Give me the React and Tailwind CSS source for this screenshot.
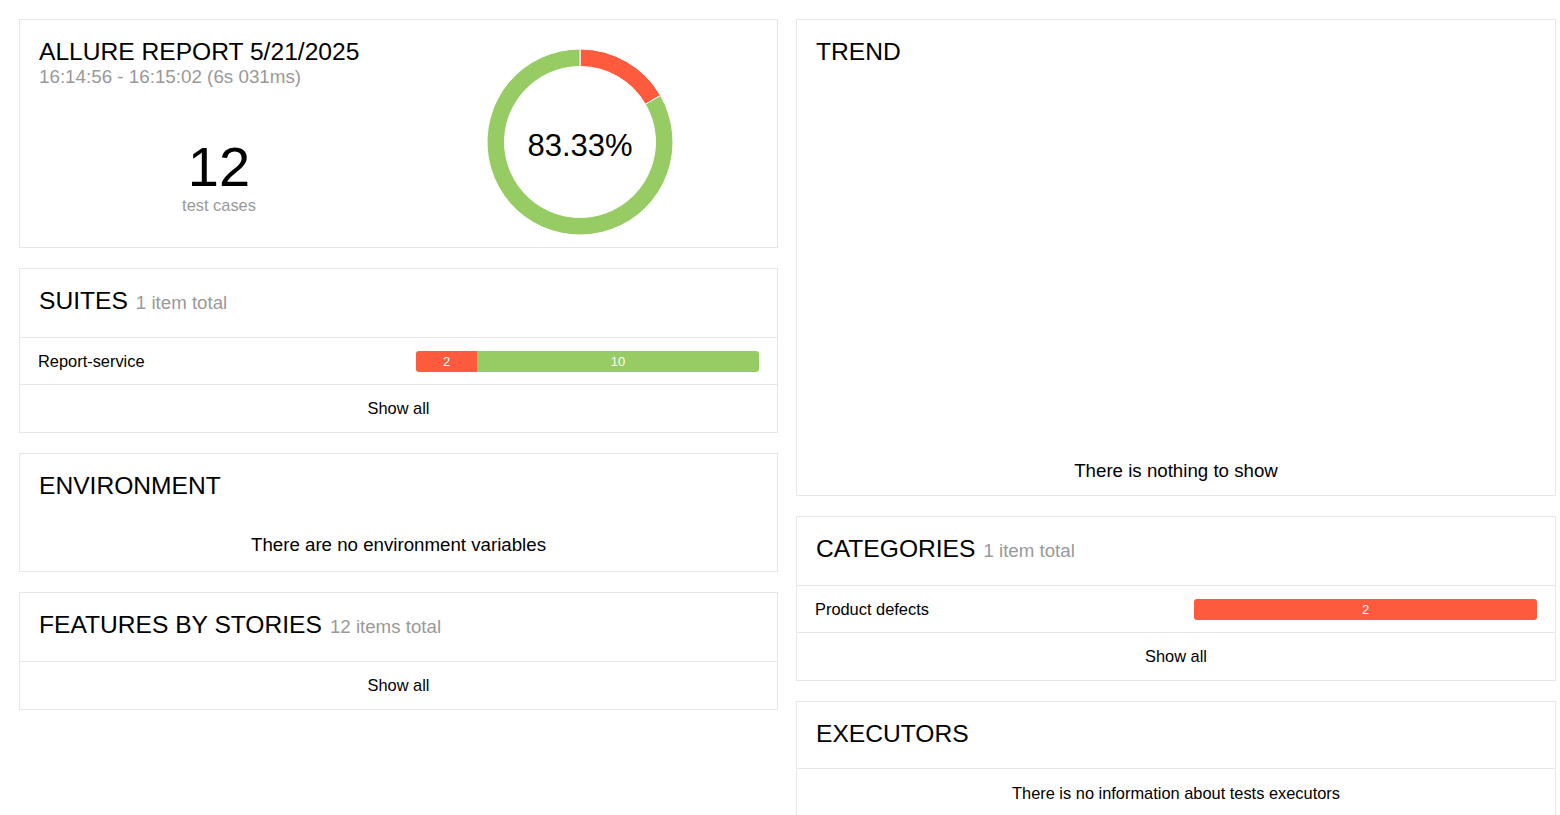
import React from "react";

const font = { fontFamily: '"Liberation Sans", Arial, sans-serif' };

const RED = "#fd5a3e";
const GREEN = "#97cc64";

function Card({ children, className = "" }) {
  return (
    <div className={`bg-white border border-[#e7e7e7] ${className}`}>
      {children}
    </div>
  );
}

function CardTitle({ title, subtitle, divider = true }) {
  return (
    <div
      className={`pl-[19px] pr-5 pt-[19px] pb-[21px] text-[24.6px] leading-[26px] text-black ${
        divider ? "border-b border-[#e7e7e7]" : ""
      }`}
    >
      {title}
      {subtitle && (
        <span className="ml-[8px] text-[18.7px] text-[#999]">{subtitle}</span>
      )}
    </div>
  );
}

function StatusBar({ segments }) {
  return (
    <div className="flex h-[21px] w-[343px] overflow-hidden rounded-[3px] text-[13px] leading-[21px] text-white">
      {segments.map((s, i) => (
        <div
          key={i}
          className={`text-center ${s.grow ? "flex-1" : ""}`}
          style={{ background: s.color, width: s.grow ? undefined : s.width }}
        >
          {s.value}
        </div>
      ))}
    </div>
  );
}

function Row({ name, segments }) {
  return (
    <div className="flex h-[47px] items-center justify-between border-b border-[#e7e7e7] px-[18px] text-[16.4px] text-black">
      <span>{name}</span>
      <StatusBar segments={segments} />
    </div>
  );
}

function ShowAll() {
  return (
    <div className="flex h-[47px] items-center justify-center text-[16.4px] text-black">
      Show all
    </div>
  );
}

function Donut() {
  // ring split: 2 failed (60deg from top), 10 passed
  return (
    <div className="relative h-[200px] w-[200px]">
      <svg width="200" height="200" viewBox="0 0 200 200">
        <path
          d="M100 7 A93 93 0 0 1 180.54 53.5 L165.38 62.25 A75.5 75.5 0 0 0 100 24.5 Z"
          fill={RED}
          stroke="#fff"
          strokeWidth="1"
        />
        <path
          d="M180.54 53.5 A93 93 0 1 1 100 7 L100 24.5 A75.5 75.5 0 1 0 165.38 62.25 Z"
          fill={GREEN}
          stroke="#fff"
          strokeWidth="1"
        />
      </svg>
      <div className="absolute inset-0 flex items-center justify-center pt-[6px] text-[31px] leading-none text-black">
        83.33%
      </div>
    </div>
  );
}

export default function App() {
  return (
    <div className="min-h-screen bg-white" style={font}>
      <div className="grid grid-cols-[759px_760px] gap-x-[18px] pl-[19px] pt-[19px]">
        {/* left column */}
        <div className="flex flex-col gap-5">
          <Card className="h-[229px]">
            <div className="flex pl-[19px] pr-5 pt-[19px]">
              <div className="flex w-[360px] flex-col">
                <div className="text-[24.6px] leading-[26px] text-black">
                  ALLURE REPORT 5/21/2025
                </div>
                <div className="text-[18.8px] leading-[24px] text-[#999]">
                  16:14:56 - 16:15:02 (6s 031ms)
                </div>
                <div className="mt-[50px] flex flex-col items-center">
                  <div className="text-[56px] leading-[56px] text-black">12</div>
                  <div className="mt-[2px] text-[16.4px] leading-4 text-[#999]">
                    test cases
                  </div>
                </div>
              </div>
              <div className="ml-[81px] mt-[3px]">
                <Donut />
              </div>
            </div>
          </Card>

          <Card>
            <CardTitle title="SUITES" subtitle="1 item total" />
            <Row
              name="Report-service"
              segments={[
                { value: 2, color: RED, width: 61 },
                { value: 10, color: GREEN, grow: true },
              ]}
            />
            <ShowAll />
          </Card>

          <Card>
            <CardTitle title="ENVIRONMENT" divider={false} />
            <div className="flex h-[51px] items-center justify-center text-[18.7px] text-black">
              There are no environment variables
            </div>
          </Card>

          <Card>
            <CardTitle title="FEATURES BY STORIES" subtitle="12 items total" />
            <ShowAll />
          </Card>
        </div>

        {/* right column */}
        <div className="flex flex-col gap-5">
          <Card>
            <CardTitle title="TREND" divider={false} />
            <div className="h-[361px]" />
            <div className="flex h-12 items-center justify-center text-[18.7px] text-black">
              There is nothing to show
            </div>
          </Card>

          <Card>
            <CardTitle title="CATEGORIES" subtitle="1 item total" />
            <Row
              name="Product defects"
              segments={[{ value: 2, color: RED, grow: true }]}
            />
            <ShowAll />
          </Card>

          <Card>
            <CardTitle title="EXECUTORS" />
            <div className="flex h-12 items-center justify-center text-[16.4px] text-black">
              There is no information about tests executors
            </div>
          </Card>
        </div>
      </div>
    </div>
  );
}
